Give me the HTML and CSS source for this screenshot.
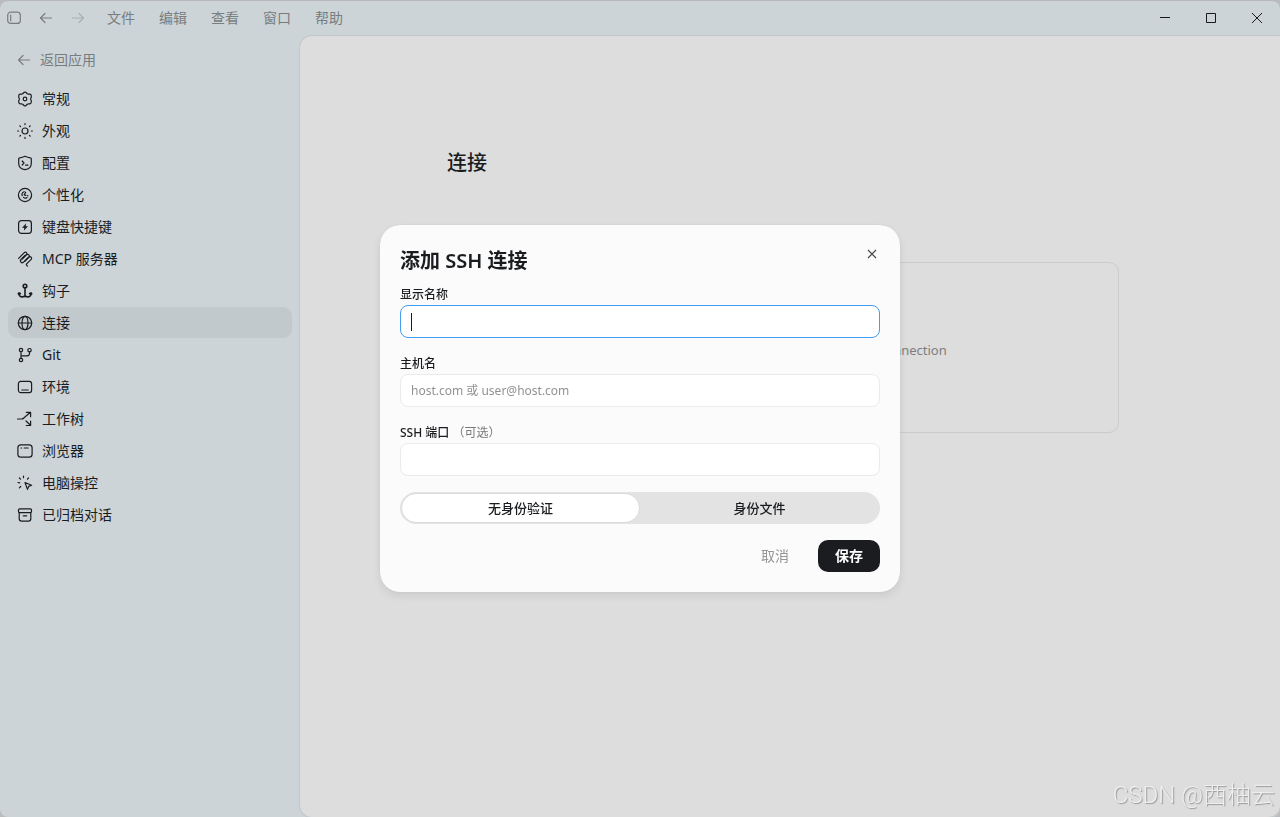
FILE: index.html
```html
<!DOCTYPE html>
<html lang="zh-CN">
<head>
<meta charset="utf-8">
<meta name="viewport" content="width=device-width, initial-scale=1">
<title>连接</title>
<link rel="stylesheet" href="styles.css">
</head>
<body>
<div class="app">
  <header class="titlebar">
    <div class="titlebar-nav">
      <button class="icon-button" type="button" aria-label="切换边栏"><svg class="icon" viewBox="0 0 16 16"><rect x="1.7" y="2.2" width="12.6" height="11.2" rx="3"/><path d="M4.7 5v5.8"/></svg></button>
      <button class="icon-button" type="button" aria-label="后退"><svg class="icon" viewBox="0 0 16 16"><path d="M13.600 8H2.500M7 3.500 2.500 8 7 12.500"/></svg></button>
      <button class="icon-button is-disabled" type="button" aria-label="前进"><svg class="icon" viewBox="0 0 16 16"><path d="M2.400 8h11.100M9 3.500 13.500 8 9 12.500"/></svg></button>
    </div>
    <nav class="menu">
      <button type="button">文件</button>
      <button type="button">编辑</button>
      <button type="button">查看</button>
      <button type="button">窗口</button>
      <button type="button">帮助</button>
    </nav>
    <div class="window-controls">
      <button type="button" aria-label="最小化"><svg viewBox="0 0 12 12"><path d="M1 5.5h10"/></svg></button>
      <button type="button" aria-label="最大化"><svg viewBox="0 0 12 12"><path d="M1.5 1.5h9v9h-9z"/></svg></button>
      <button type="button" aria-label="关闭窗口"><svg viewBox="0 0 12 12"><path d="m1 1 10 10M11 1 1 11"/></svg></button>
    </div>
  </header>

  <aside class="sidebar">
    <a class="back" href="#"><svg class="icon" viewBox="0 0 16 16"><path d="M13.600 8H2.500M7 3.500 2.500 8 7 12.500"/></svg>返回应用</a>
    <nav class="settings">
      <a href="#"><svg class="icon" viewBox="0 0 16 16"><path d="M7.200 1.300c.5-.3 1.100-.3 1.600 0l1.500 1.400c.3.300.6.400 1 .4l1.600.1c.7.100 1.200.6 1.300 1.300l.1 1.500c0 .4-.1.600-.3.900l-.3.600c-.2.300-.2.700 0 1l.3.600c.2.300.3.500.3.900l-.1 1.500c-.1.700-.6 1.200-1.300 1.300l-1.600.1c-.4 0-.7.100-1 .4l-1.500 1.400c-.5.300-1.100.3-1.600 0l-1.500-1.400c-.3-.3-.6-.4-1-.4l-1.600-.1c-.7-.1-1.200-.6-1.300-1.300L1.700 10c0-.4.1-.6.300-.9l.3-.6c.2-.3.2-.7 0-1L2 6.900c-.2-.3-.3-.5-.3-.9l.1-1.500c.1-.7.6-1.200 1.300-1.300l1.600-.1c.4 0 .7-.1 1-.4z"/><circle cx="8" cy="8" r="1.800"/></svg>常规</a>
      <a href="#"><svg class="icon" viewBox="0 0 16 16"><circle cx="8" cy="8" r="3"/><path d="M8 .6v1M8 14.400v1M.6 8h1M14.400 8h1M2.800 2.800l.7.7M12.500 12.500l.7.7M13.200 2.800l-.7.7M3.500 12.500l-.7.7"/></svg>外观</a>
      <a href="#"><svg class="icon" viewBox="0 0 16 16"><path d="M8 1.300c2 1 3.800 1.400 5.300 1.500.6 0 1 .5 1 1.100v4.400c0 3.500-2.600 6-6.300 6.400-3.700-.4-6.300-2.900-6.300-6.400V3.900c0-.6.400-1.100 1-1.100C4.200 2.700 6 2.300 8 1.300z"/><path d="m5.200 6 1.800 2-1.800 2M8.600 10.200h2.300"/></svg>配置</a>
      <a href="#"><svg class="icon" viewBox="0 0 16 16"><circle cx="8" cy="8" r="6.600"/><path d="M7.200 4.700C5.300 5.500 4.600 7 5.200 8.700M8.700 5.200 7.200 7.800l1.700.5M6.500 10.300c1 1 2.500 1 3.500.2M10.800 8.400v.6"/></svg>个性化</a>
      <a href="#"><svg class="icon" viewBox="0 0 16 16"><rect x="1.600" y="1.600" width="12.800" height="12.800" rx="2.800"/><path class="solid" d="M9.200 4.300 5 8.700h2.300l-.5 3.100L11 7.300H8.600z"/></svg>键盘快捷键</a>
      <a href="#"><svg class="icon" viewBox="0 0 16 16"><path d="m1.600 7.300 5.700-5.700c1.600-1.200 3.300.6 2.200 2.100L5.300 7.900"/><path d="m5.500 7.700 4-4c1.700-1.200 3.700.8 2.400 2.400L7.700 10.300"/><path d="m3.300 9.200 4.700-4.800M7.900 10.100 12 6c1.600-1.100 3.400.7 2.200 2.300l-4.600 4.600c-.5.6-.3 1 .2 1.400l.7.8M10.400 7.200 6.300 11.300c-1.600 1.400-3.700-.7-2.400-2.300"/></svg>MCP 服务器</a>
      <a href="#"><svg class="icon bold" viewBox="0 0 16 16"><circle cx="8" cy="3" r="1.800"/><path d="M8 4.800v9M1.900 10.200c.1 2.700 1.300 3.700 3.500 3.700 1.300 0 2.100-.4 2.600-1.200.5.800 1.300 1.200 2.600 1.200 2.200 0 3.400-1 3.500-3.700M1.300 10.800l.8-1 1.300.9M14.700 10.800l-.8-1-1.300.9"/></svg>钩子</a>
      <a class="is-active" href="#" aria-current="page"><svg class="icon" viewBox="0 0 16 16"><circle cx="8" cy="8" r="6.700"/><ellipse cx="8" cy="8" rx="3" ry="6.700"/><path d="M1.300 8h13.400"/></svg>连接</a>
      <a href="#"><svg class="icon" viewBox="0 0 16 16"><circle cx="4" cy="3" r="1.700"/><circle cx="4" cy="13" r="1.700"/><circle cx="12.500" cy="3.200" r="1.700"/><path d="M4 4.700v6.600M4 8.900h5.500c2 0 3-1 3-2.500V4.900"/></svg>Git</a>
      <a href="#"><svg class="icon" viewBox="0 0 16 16"><rect x="1.400" y="2.400" width="13.200" height="11.200" rx="2.300"/><path d="M4.800 11h6.400"/></svg>环境</a>
      <a href="#"><svg class="icon" viewBox="0 0 16 16"><path d="M.6 8h4c1 0 1.500-.3 2.200-1l6.600-5.700M9.300 1.300h4.300v4.400M9 10l4.500 4.300M9.300 14.500h4.300v-4.300"/></svg>工作树</a>
      <a href="#"><svg class="icon" viewBox="0 0 16 16"><rect x=".9" y="1.800" width="14.200" height="12.400" rx="3"/><path d="M4 5h.6M7.200 5h4"/></svg>浏览器</a>
      <a href="#"><svg class="icon" viewBox="0 0 16 16"><path d="m8 7.500 6.600 2.700-2.900 1.200-1.200 3zM6.500 1v1.700M2.400 3l1.100 1.200M1 7.500l1.700.4M10.500 4.200l1-1.300M2.400 12.800l1.300-1.300"/></svg>电脑操控</a>
      <a href="#"><svg class="icon" viewBox="0 0 16 16"><rect x="1.500" y="1.800" width="13" height="3.800" rx="1.200"/><path d="M2.200 5.600v6.200c0 1.600.8 2.400 2.400 2.400h6.800c1.600 0 2.400-.8 2.400-2.400V5.600M6.300 8.800h3.400"/></svg>已归档对话</a>
    </nav>
  </aside>

  <main class="page">
    <div class="page-body">
      <h1>连接</h1>
      <section class="empty-card"><p>Add a remote host to create your first SSH connection</p></section>
    </div>
  </main>
</div>

<div class="backdrop">
  <form class="dialog" role="dialog" aria-modal="true" aria-labelledby="dialog-title">
    <button class="dialog-close" type="button" aria-label="关闭"><svg viewBox="0 0 10 10"><path d="m1 1 8 8M9 1 1 9"/></svg></button>
    <h2 id="dialog-title">添加 SSH 连接</h2>
    <div class="fields">
      <div class="field">
        <label for="name">显示名称</label>
        <input id="name" type="text" placeholder=" " autofocus autocomplete="off">
      </div>
      <div class="field">
        <label for="host">主机名</label>
        <input id="host" type="text" placeholder="host.com 或 user@host.com">
      </div>
      <div class="field">
        <label for="port">SSH 端口 <span>（可选）</span></label>
        <input id="port" type="text" inputmode="numeric">
      </div>
      <div class="segmented">
        <button class="is-selected" type="button" aria-pressed="true">无身份验证</button>
        <button type="button" aria-pressed="false">身份文件</button>
      </div>
      <div class="actions">
        <button class="cancel" type="button">取消</button>
        <button class="save" type="submit">保存</button>
      </div>
    </div>
  </form>
</div>
<div class="watermark">CSDN @西柚云</div>
</body>
</html>
```
FILE: styles.css
```css
* { box-sizing: border-box; }

body {
  margin: 0;
  background: #b9bbbc;
  color: #1a1c1f;
  font: 14px/20px "Noto Sans", "Noto Sans CJK SC", sans-serif;
}

button, input { font: inherit; color: inherit; }
button { padding: 0; border: 0; background: none; }
a { color: inherit; text-decoration: none; }

svg { fill: none; stroke: currentColor; }
.icon {
  flex: none;
  width: 16px;
  height: 16px;
  stroke-width: 1.2;
  stroke-linecap: round;
  stroke-linejoin: round;
}
.icon .solid { fill: currentColor; stroke: none; }
.icon.bold { stroke-width: 1.6; }

.app {
  display: grid;
  grid-template: 35px 1fr / 300px 1fr;
  min-height: 100vh;
  border-top: 1px solid #b6b8b9;
  border-radius: 8px;
  overflow: hidden;
  background: #ccd4d7;
}

.titlebar {
  grid-column: 1 / -1;
  display: flex;
  align-items: center;
  padding-bottom: 2px;
  color: #787d80;
}
.titlebar-nav { display: flex; gap: 16px; padding-left: 6px; }
.icon-button { display: flex; }
.icon-button.is-disabled { color: #a9b0b3; }
.menu { display: flex; gap: 24px; padding-left: 21px; }
.window-controls { display: flex; align-self: stretch; margin-left: auto; color: #17191b; }
.window-controls button { width: 46px; display: grid; place-items: center; }
.window-controls svg { width: 12px; height: 12px; }

.sidebar { padding: 14px 8px; }
.back {
  display: flex;
  align-items: center;
  gap: 8px;
  padding: 0 8px;
  color: #787d80;
}
.settings { display: grid; gap: 1px; margin-top: 13px; }
.settings a {
  display: flex;
  align-items: center;
  gap: 9px;
  height: 31px;
  padding: 0 9px;
  border-radius: 9px;
}
.settings .is-active { background: #c1c9cc; }

.page {
  padding: 112px 38px 24px 24px;
  border-radius: 12px 0 12px 12px;
  background: #ddd;
  box-shadow: 0 0 0 1px #c1c7c9;
}
.page-body { max-width: 672px; margin: 0 auto; }
h1 { margin: 0; font-size: 20px; line-height: 30px; font-weight: 500; }
.empty-card {
  display: grid;
  place-items: center;
  margin-top: 84px;
  min-height: 171px;
  padding: 24px;
  border: 1px solid #cbcbcb;
  border-radius: 10px;
  color: #7d7d7d;
  font-size: 13px;
}
.empty-card p { margin: 0; padding-top: 4px; }

.backdrop {
  position: fixed;
  inset: 0;
  display: grid;
  place-items: center;
}
.dialog {
  position: relative;
  width: min(520px, 100% - 32px);
  padding: 20px;
  border-radius: 20px;
  background: #fbfbfb;
  box-shadow: 0 0 1px #0003, 0 4px 8px #00000014;
}
.dialog-close {
  position: absolute;
  top: 20px;
  right: 20px;
  width: 16px;
  height: 18px;
  display: grid;
  place-items: center;
  color: #45474a;
}
.dialog-close svg { width: 10px; height: 10px; stroke-width: 1.1; }
h2 { margin: 0 0 8px; font-size: 20px; line-height: 32px; font-weight: 600; }
.fields { display: grid; gap: 16px; }
.field { display: grid; }
.field label { font-size: 12px; line-height: 20px; font-weight: 500; }
.field label span { color: #77797b; font-weight: 400; }
.field input {
  width: 100%;
  height: 33px;
  padding: 0 10px;
  border: 1px solid #ebebeb;
  border-radius: 8px;
  outline: 0;
  background: #fff;
  font-size: 12px;
}
.field input:focus { border-color: #459cf3; }
.field input:focus:placeholder-shown {
  caret-color: transparent;
  background: #fff linear-gradient(#1a1c1f, #1a1c1f) 10px center / 1px 18px no-repeat;
}
.field input::placeholder { color: #929292; opacity: 1; }

.segmented {
  display: grid;
  grid-template-columns: 1fr 1fr;
  height: 32px;
  padding: 1px;
  border-radius: 16px;
  background: #e3e3e3;
}
.segmented button { border-radius: 15px; font-size: 13px; font-weight: 500; }
.segmented .is-selected { background: #fff; border: 1px solid #dadada; }

.actions { display: flex; justify-content: flex-end; gap: 12px; }
.actions button { height: 32px; border-radius: 10px; }
.cancel { padding: 0 17px; color: #969696; }
.save { padding: 0 17px; background: #1a1c1f; color: #fff; font-weight: 600; }

.watermark {
  position: fixed;
  right: 5px;
  bottom: 4px;
  color: #eee;
  font: 300 24px/36px Roboto, "Noto Sans CJK SC", sans-serif;
  text-shadow: 1px 1px 1px #999;
}
```
